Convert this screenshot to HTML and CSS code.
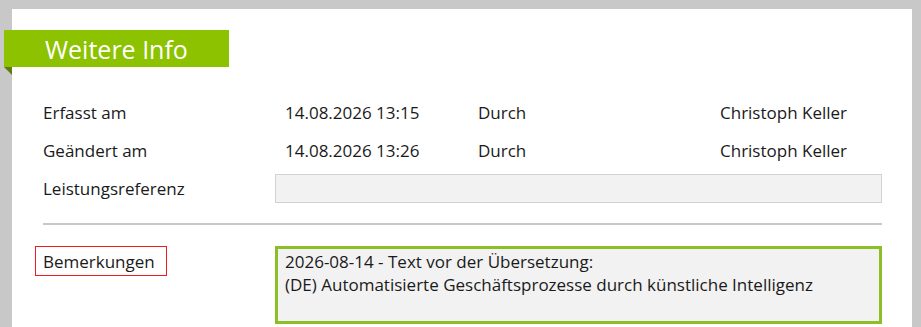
FILE: index.html
```html
<!DOCTYPE html>
<html lang="de">
<head>
<meta charset="utf-8">
<title>Weitere Info</title>
<link rel="stylesheet" href="styles.css">
</head>
<body>
<div class="panel">
  <div class="ribbon"><span class="ribbon-text">Weitere Info</span></div>
  <div class="info-grid">
    <div class="cell label">Erfasst am</div>
    <div class="cell value">14.08.2026 13:15</div>
    <div class="cell">Durch</div>
    <div class="cell">Christoph Keller</div>

    <div class="cell label">Geändert am</div>
    <div class="cell value">14.08.2026 13:26</div>
    <div class="cell">Durch</div>
    <div class="cell">Christoph Keller</div>

    <div class="cell label">Leistungsreferenz</div>
    <div class="cell span3"><div class="input"></div></div>
  </div>
  <div class="separator"></div>
  <div class="notes-row">
    <div class="notes-label-col"><span class="notes-label">Bemerkungen</span></div>
    <div class="notes-box">2026-08-14 - Text vor der Übersetzung:<br>(DE) Automatisierte Geschäftsprozesse durch künstliche Intelligenz</div>
  </div>
</div>
</body>
</html>
```
FILE: styles.css
```css
html, body {
  margin: 0;
  padding: 0;
  background: #c8c8c8;
  height: 100%;
  overflow: hidden;
}
body {
  font-family: "Open Sans", "Noto Sans", sans-serif;
  font-size: 17px;
  color: #1a1a1a;
}
.panel {
  margin: 9px 0 0 12px;
  width: 900px;
  height: 318px;
  background: #ffffff;
  box-sizing: border-box;
  padding: 21px 30px 0 31px;
}
.ribbon {
  position: relative;
  margin-left: -39px;
  width: 225px;
  height: 37px;
  background: #8cc200;
  display: flex;
  align-items: center;
  box-sizing: border-box;
  padding-left: 41px;
}
.ribbon::after {
  content: "";
  position: absolute;
  left: 0;
  top: 37px;
  width: 0;
  height: 0;
  border-top: 8px solid #5d7d12;
  border-left: 8px solid transparent;
}
.ribbon-text {
  color: #ffffff;
  font-size: 25px;
  line-height: 30px;
}
.info-grid {
  margin-top: 26px;
  display: grid;
  grid-template-columns: 232px 203px 242px 1fr;
  grid-auto-rows: 38px;
}
.cell {
  display: flex;
  align-items: center;
  line-height: 23px;
  white-space: nowrap;
}
.value {
  padding-left: 10px;
}
.span3 {
  grid-column: 2 / span 3;
}
.input {
  width: 100%;
  height: 29px;
  box-sizing: border-box;
  border: 1px solid #d2d2d2;
  background: #f2f2f2;
}
.separator {
  margin-top: 16px;
  height: 2px;
  background: #c8c8c8;
}
.notes-row {
  margin-top: 21px;
  display: flex;
  align-items: flex-start;
}
.notes-label-col {
  width: 232px;
  flex: none;
}
.notes-label {
  display: inline-flex;
  align-items: center;
  margin-left: -8px;
  width: 132px;
  height: 30px;
  box-sizing: border-box;
  padding-left: 7px;
  border: 1px solid #ee1c1c;
  line-height: 23px;
}
.notes-box {
  flex: 1;
  height: 78px;
  box-sizing: border-box;
  border: 3px solid #8cbf26;
  background: #f2f2f2;
  padding: 1px 7px;
  line-height: 23px;
}
```
